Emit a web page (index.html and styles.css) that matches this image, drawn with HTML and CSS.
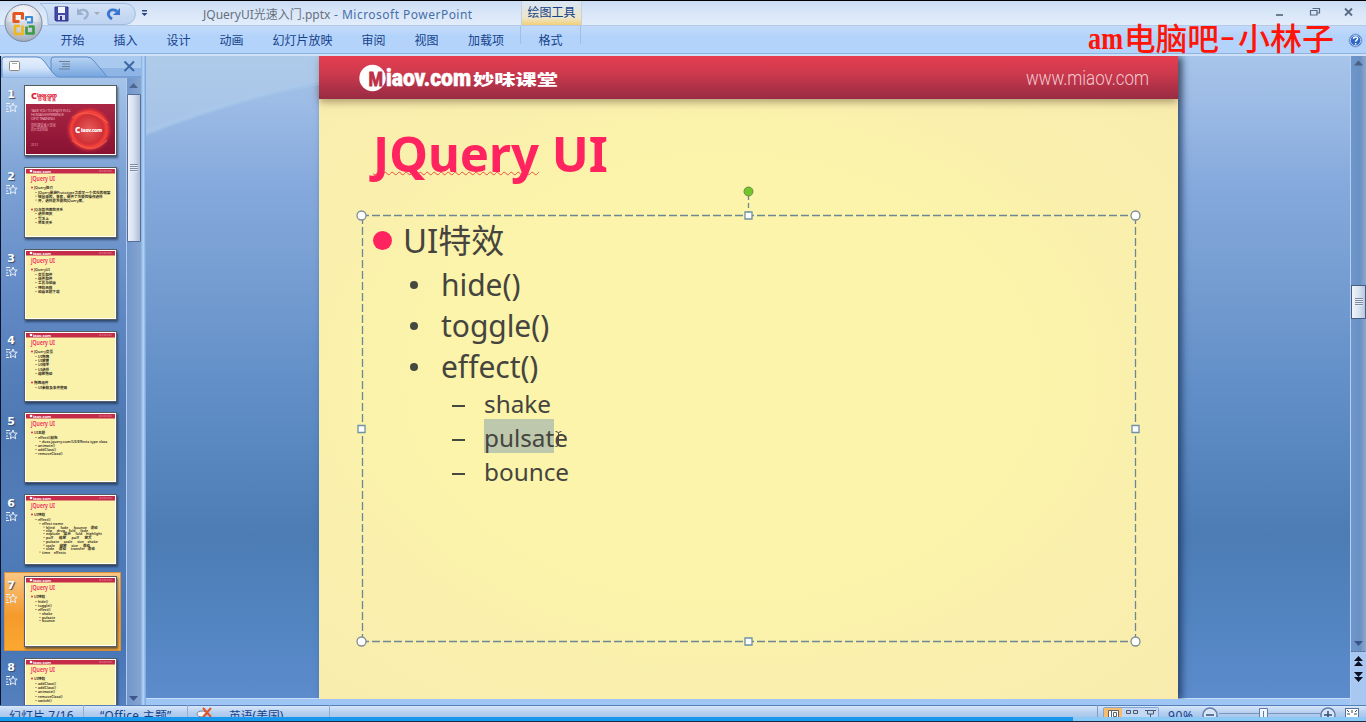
FILE: index.html
```html
<!DOCTYPE html>
<html lang="zh-CN">
<head>
<meta charset="utf-8">
<title>JQueryUI光速入门.pptx - Microsoft PowerPoint</title>
<link rel="stylesheet" href="styles.css">
</head>
<body>
<div class="app">
  <header class="ribbon">
    <div class="titlebar">
      <div class="quick">
        <svg class="quick-icons" width="156" height="26" viewBox="0 0 156 26">
          <defs><linearGradient id="qg" x1="0" y1="0" x2="0" y2="1"><stop offset="0" stop-color="#d3e2f6"/><stop offset="1" stop-color="#bdd3f1"/></linearGradient></defs>
          <path d="M40 3.500H124c15 0 15 21 0 21H48C48 15 47 8 40 3.500Z" fill="url(#qg)" stroke="#9ebbe0"/>
          <path d="M55 7h13v14H56l-1-1z" fill="#4148a8" stroke="#30348c"/><path d="M58 7h7v6h-7z" fill="#f4f6ff"/><path d="M58 15h7v5h-7z" fill="#d4d9ee"/><path d="M60 16h2v4h-2z" fill="#30348c"/>
          <path d="M79 11c8-4 12 4 5 8" fill="none" stroke="#9db0d0" stroke-width="2.500"/><path d="M77 8v7h7z" fill="#9db0d0"/>
          <path d="M94 12h6l-3 3z" fill="#a4a9b5"/>
          <path d="M117 11c-8-4-12 4-5 8" fill="none" stroke="#3a75cf" stroke-width="3"/><path d="M120 8v7h-7z" fill="#3a75cf"/>
          <path d="M142 10h5v1.500h-5zM141.500 13h6l-3 3z" fill="#28467e"/>
        </svg>
      </div>
      <div class="doc-title"><span>JQueryUI光速入门.pptx</span><span class="app-name"> - Microsoft PowerPoint</span></div>
      <div class="context-title">绘图工具</div>
      <svg class="win-buttons" width="90" height="25" viewBox="0 0 90 25">
        <path d="M1 14h7" stroke="#586a86" stroke-width="1.700"/>
        <path d="M37.500 7.500h7v4.500h-2M35.500 9.500h6.500v4.500h-6.500z" fill="none" stroke="#586a86" stroke-width="1.200"/>
        <path d="M70 7.500l7 7M77 7.500l-7 7" stroke="#586a86" stroke-width="1.800"/>
      </svg>
    </div>
    <nav class="tabs">
      <span>开始</span><span>插入</span><span>设计</span><span>动画</span><span>幻灯片放映</span><span>审阅</span><span>视图</span><span>加载项</span><span class="context-tab">格式</span>
    </nav>
    <svg class="orb" width="42" height="42" viewBox="0 0 42 42">
      <defs><radialGradient id="og" cx=".5" cy=".3" r=".7"><stop offset="0" stop-color="#fff"/><stop offset=".55" stop-color="#dfe3ea"/><stop offset="1" stop-color="#9da8b8"/></radialGradient></defs>
      <circle cx="21.500" cy="22" r="18.500" fill="url(#og)" stroke="#78889f"/>
      <path d="M4 22c8-3 25-3 35 0c-1 21-34 21-35 0" fill="#a7b5c9" opacity=".35"/>
      <g fill="none" transform="translate(.5 .5)">
        <path d="M17 20h-5.500v-8h8.500v6" stroke="#e2571f" stroke-width="3.200" stroke-linejoin="round"/>
        <path d="M23.500 19v-3.500h6v5.500h-5" stroke="#3c8ed6" stroke-width="2.200" stroke-linejoin="round"/>
        <path d="M20 24v8.500h-7.500v-8h5" stroke="#f2b51d" stroke-width="2.700" stroke-linejoin="round"/>
        <path d="M24 25v7h7v-7h-5" stroke="#3f9b47" stroke-width="2.700" stroke-linejoin="round"/>
      </g>
    </svg>
    <div class="watermark">
      <svg width="250" height="36" viewBox="0 0 250 36">
        <g class="wm-text"><text x="1" y="25.500" textLength="35" lengthAdjust="spacingAndGlyphs">am</text><text class="wm-cjk" x="37" y="26.500" textLength="95" lengthAdjust="spacingAndGlyphs">电脑吧</text><text x="133" y="23" textLength="15" lengthAdjust="spacingAndGlyphs">-</text><text class="wm-cjk" x="151" y="26.500" textLength="96" lengthAdjust="spacingAndGlyphs">小林子</text></g>
      </svg>
    </div>
    <svg class="help" width="15" height="15" viewBox="0 0 15 15"><circle cx="7.500" cy="7.500" r="6.500" fill="#2e66c8" stroke="#8aa9d8"/><circle cx="7.500" cy="7.500" r="5.200" fill="none" stroke="#dce9fb" stroke-width=".8"/><path d="M5.500 6c0-3 4.500-2.500 4 0c-.3 1.200-1.900 1.300-1.900 2.700M7.600 10v1.500" fill="none" stroke="#fff" stroke-width="1.500"/></svg>
  </header>

  <main class="workspace">
    <aside class="panel">
      <svg class="panel-tabs" width="140" height="22" viewBox="0 0 140 22">
        <defs><linearGradient id="pt" x1="0" y1="0" x2="0" y2="1"><stop offset="0" stop-color="#e5effc"/><stop offset=".55" stop-color="#d3e4fa"/><stop offset="1" stop-color="#a0c2ec"/></linearGradient>
        <linearGradient id="pt2" x1="0" y1="0" x2="0" y2="1"><stop offset="0" stop-color="#b8d3f3"/><stop offset="1" stop-color="#77a6df"/></linearGradient></defs>
        <path d="M0 0h140v22H0z" fill="#a9c9ef"/><path d="M0 12h140v10H0z" fill="#8fb5e6"/>
        <path d="M50 20.500V4q0-3 3-3H86q4 0 7 4l13 15.500" fill="url(#pt2)" stroke="#5e8cc6"/>
        <path d="M1 21V4q0-3 3-3H36q4 0 7 4l9 12q3 4 7 4z" fill="url(#pt)"/><path d="M1 21V4q0-3 3-3H36q4 0 7 4l9 12q3 4 7 4H140" fill="none" stroke="#5e8cc6"/>
        <rect x="8.500" y="5.500" width="10" height="9" rx="1" fill="#fff" stroke="#8d887c"/><path d="M11 7.500h5" stroke="#aaa"/>
        <path d="M58 5.500h11M61 8h8M61 10.500h8M58 13h11" stroke="#6d7f98" stroke-width="1.200"/>
        <path d="M123.500 5.500l9.500 9.500M133 5.500l-9.500 9.500" stroke="#3c69a4" stroke-width="2"/>
      </svg>
      <div class="panel-body">
        <div class="thumbs" id="thumbs"></div>
        <div class="scroll left-scroll">
          <svg width="14" height="16"><path d="M2 10h9l-4.500-5z" fill="#4e6791"/></svg>
          <div class="left-thumb"><i></i></div>
          <svg class="down" width="14" height="14"><path d="M2 5h9l-4.500 5z" fill="#3e568c"/></svg>
        </div>
      </div>
    </aside>
    <div class="splitter"></div>
    <section class="stage">
      <svg class="stage-glow" viewBox="0 0 173 80" width="173" height="80"><path d="M0 0h173v26Q90 43 0 78z" fill="#b8d3ea" opacity=".45"/><path d="M0 73Q85 38 173 26v3Q85 46 0 80z" fill="#a9caeb" opacity=".4"/></svg>
      <article class="slide">
        <div class="slide-head">
          <svg width="205" height="32" viewBox="0 0 205 32">
            <circle cx="13.500" cy="16" r="13.200" fill="#fff"/>
            <text class="logo-m" x="9.500" y="23.500" textLength="14.500" lengthAdjust="spacingAndGlyphs">M</text>
            <text class="logo-word" x="27" y="24.200" textLength="85" lengthAdjust="spacingAndGlyphs">iaov.com</text>
            <g transform="translate(114 22.500) scale(1 .86)"><text class="logo-cjk" x="0" y="0" textLength="85" lengthAdjust="spacingAndGlyphs">妙味课堂</text></g>
          </svg>
          <svg width="126" height="30" viewBox="0 0 126 30"><text class="site" x="2" y="23" textLength="123" lengthAdjust="spacingAndGlyphs">www.miaov.com</text></svg>
        </div>
        <h1 class="slide-title"><span class="misspelt">JQuery</span> UI</h1>
        <div class="textbox">
          <p class="l1"><i></i>UI特效</p>
          <p class="l2"><i></i>hide()</p>
          <p class="l2"><i></i>toggle()</p>
          <p class="l2"><i></i>effect()</p>
          <p class="l3"><i></i>shake</p>
          <p class="l3"><i></i><span class="selected">pulsat</span>e</p>
          <p class="l3"><i></i>bounce</p>
          <svg class="frame" width="790" height="466" viewBox="0 0 790 466">
            <g fill="none" stroke="#6d8795" stroke-width="1.300"><path d="M8 32.500H781M8 458.500H781M782.500 33V458M9.500 33V458" stroke-dasharray="8 3"/><path d="M395.500 12v18" stroke-dasharray="5 3"/></g>
            <g fill="#fff" stroke="#7f8c98" stroke-width="1.300"><circle cx="8.500" cy="32.500" r="4.500"/><circle cx="782.500" cy="32.500" r="4.500"/><circle cx="8.500" cy="458.500" r="4.500"/><circle cx="782.500" cy="458.500" r="4.500"/><path d="M392 29h7v7h-7zM392 455h7v7h-7zM5 242.500h7v7h-7zM779 242.500h7v7h-7z" stroke="#6d91a5"/></g>
            <circle cx="395.500" cy="8.500" r="4.500" fill="#72c62b" stroke="#6d8c4a"/>
            <path d="M202.500 248.500q3 0 3 2v11q0 2-3 2M208.500 248.500q-3 0-3 2M205.500 261.500q0 2 3 2" fill="none" stroke="#444"/>
          </svg>
        </div>
      </article>
    </section>
    <div class="scroll right-scroll">
      <svg width="15" height="17"><path d="M3 9.500h9l-4.500-5z" fill="#4c5e80"/></svg>
      <div class="right-thumb"><i></i></div>
      <svg class="right-down" width="15" height="64" viewBox="0 0 15 64"><path d="M3 0h9l-4.500 5z" fill="#3c5388"/><path d="M0 10.500h15" stroke="#5c6f94" stroke-dasharray="2 1"/><path d="M0 11h15v53H0z" fill="#a8c8f1"/><path d="M3 20h9l-4.500-5zM3 25h9l-4.500-5zM3 31h9l-4.500 5zM3 36h9l-4.500 5z" fill="#0a1020"/></svg>
    </div>
  </main>

  <footer class="status">
    <span class="s1">幻灯片 7/16</span><span class="s2">“Office 主题”</span>
    <span class="s3"><svg width="18" height="12" viewBox="0 0 18 12"><ellipse cx="6" cy="9" rx="5" ry="3" fill="#f4f4f4" stroke="#7c8798"/><path d="M7 3l8 9M15 3l-8 9" stroke="#e4532a" stroke-width="2"/></svg>英语(美国)</span>
    <span class="s4"></span>
    <svg class="views" width="262" height="12" viewBox="0 0 262 12">
      <path d="M.5 0v12" stroke="#7d9fca"/><rect x="6.500" y="2.500" width="55" height="14" rx="1" fill="#c2d8f5" stroke="#85a4ce"/><path d="M7 3h18v9H7z" fill="#f5bd6d"/>
      <path d="M11.500 5.500h10v8h-10zM14.500 5v7M16.500 7.500h3v4h-3z" fill="#fff" stroke="#5f6270"/>
      <path d="M29.500 5.500h4v3h-4zM36.500 5.500h4v3h-4zM48 5.500h11M50.500 6v3h6v-3M53.500 9v3" fill="none" stroke="#4d596b"/>
      <text x="71" y="14.500" class="zoom" textLength="25">90%</text>
      <circle cx="113" cy="10" r="7" fill="#d8e5f7" stroke="#647eaa" stroke-width="1.500"/><path d="M109 10h8" stroke="#314c7a" stroke-width="1.500"/>
      <path d="M122 8.500h105" stroke="#7b95bd"/><path d="M162.500 3.500h8v12h-8z" fill="#eef5ff" stroke="#657ca6"/><path d="M166.500 6v6" stroke="#657ca6"/>
      <circle cx="231" cy="10" r="7" fill="#d8e5f7" stroke="#647eaa" stroke-width="1.500"/><path d="M227 10h8M231 6v8" stroke="#314c7a" stroke-width="1.500"/>
      <rect x="248.500" y="3.500" width="13" height="12" fill="#fff" stroke="#54709c"/><path d="M255 5v3M250 9h3M257 9h3M250 5l2 2M260 5l-2 2" stroke="#39424f"/>
    </svg>
  </footer>
  <div class="progress"><i></i></div>
</div>
<script src="thumbs.js"></script>
</body>
</html>
```

FILE: styles.css
```css
* { box-sizing: border-box; }
body { margin: 0; overflow: hidden; font-family: "Noto Sans", "Noto Sans CJK SC", sans-serif; background: #1b2a40; }
p, h1 { margin: 0; font-weight: 400; }
svg { display: block; flex: none; }
.app { width: 1366px; height: 722px; display: flex; flex-direction: column; border-top: 1px solid #000; }

/* ribbon */
.ribbon { position: relative; height: 55px; flex: none; }
.titlebar { height: 25px; display: flex; background: linear-gradient(#c9dbf4, #d9e6f8 45%, #e2edfb); border-bottom: 1px solid #b4cae6; }
.quick { width: 203px; flex: none; }
.quick-icons { margin-top: -1px; }
.doc-title { width: 318px; flex: none; white-space: pre; font-size: 12px; line-height: 27px; color: #66717f; }
.app-name { color: #466fa8; letter-spacing: .48px; }
.context-title { width: 61px; flex: none; text-align: center; font-size: 12px; line-height: 24px; color: #15428b; background: linear-gradient(#d8e6f7, #eee6c8 70%, #f3cf76); border-left: 1px solid #c4d0dc; border-right: 1px solid #c4d0dc; }
.win-buttons { margin-left: auto; width: 92px; }
.tabs { height: 30px; display: grid; grid-template-columns: 53px 53px 53px 53px 89px 53px 53px 66px 61px; padding-left: 46px; background: linear-gradient(#c2dafa, #b3d3fb 40%, #b3d3fb); border-bottom: 2px solid #cfe1f6; box-shadow: inset 0 -1px #91b3df; font-size: 12px; line-height: 29px; text-align: center; color: #15428b; }
.tabs .context-tab { margin: 0 -1px 0 1px; border-left: 1px solid #a4bfdc; border-right: 1px solid #a4bfdc; height: 18px; }
.orb { position: absolute; left: 2px; top: 0; }
.help { position: absolute; left: 1348px; top: 32px; }
.watermark { position: absolute; left: 1087px; top: 22px; }
.watermark svg { overflow: visible; }
.wm-text { font: bold 32px "Liberation Serif", serif; fill: #ff1408; }
.wm-cjk { font: 500 31px "Noto Sans CJK SC", sans-serif; }

/* workspace */
.workspace { height: 649px; flex: none; display: flex; background: linear-gradient(#a7c5e9, #9dbce6 45px, #85a9dc 130px, #789fd3 210px, #6390c8 320px, #4d7cb4 480px, #5284c0 560px, #5e8cce 649px); }
.panel { width: 141px; flex: none; border-left: 1px solid #08142c; }
.panel-body { display: flex; height: 627px; background: linear-gradient(#a6c4e8, #7fa4d6 90px, #6088c4 230px, #4d78b2 350px, #527db8 450px, #4574b6 560px, #5580bd); }
.thumbs { width: 125px; flex: none; padding-top: 4px; overflow: hidden; }
.thumb { height: 81.850px; width: 119px; padding: 3px 4px 0 3px; display: flex; }
.thumb.active { background: linear-gradient(#f9c887, #f49a2b 55%, #fba931); box-shadow: inset 0 0 0 1px #dd913b; height: 79px; margin: -1px 0 3.850px 3px; width: 117px; padding: 4px 0 0; }
.num { width: 20px; flex: none; color: #fff; font: bold 11px/15px "DejaVu Sans", sans-serif; text-align: center; padding: 2px 6px 0 0; text-shadow: 1px 1px 1px #36486c; }
.num svg { margin: 0 0 0 2px; }
.pic { border: 1px solid #565d5e; box-shadow: 1px 2px 2px rgba(20, 35, 60, .6); height: 71px; }
.t-title { font: 600 6.4px "Noto Sans", sans-serif; fill: #f12560; }
.t-body { font: 600 3.6px "Noto Sans", "Noto Sans CJK SC", sans-serif; fill: #332f24; white-space: pre; }
.t-logo { font: bold 4px "Noto Sans", sans-serif; fill: #fff; }
.scroll { flex: none; display: flex; flex-direction: column; }
.left-scroll { width: 15px; border-left: 1px solid #b2cbed; background: linear-gradient(90deg, #7196cd, #86a5ce); }
.left-thumb { height: 148px; border: 1px solid #586d95; border-radius: 1px; background: linear-gradient(90deg, #edf2f9, #d5e0f0 50%, #aebdd4); display: grid; place-items: center; }
.scroll i { width: 8px; height: 8px; background: repeating-linear-gradient(#7e8ba2 0 1px, #e6edf6 1px 2px); }
.down { margin-top: auto; }
.splitter { width: 5px; flex: none; background: linear-gradient(90deg, #83b0e6, #b5d4f7 45%, #79a3d7); }
.stage { position: relative; width: 1204px; flex: none; padding-left: 173px; border-bottom: 6px solid #9ec5f3; box-shadow: inset 0 -1px #c7e0fa; overflow: hidden; }
.stage-glow { position: absolute; left: 0; top: 0; }
.slide { width: 859px; height: 643px; background: radial-gradient(ellipse at 47% 50%, #fbf4aa 45%, #faf0ad 65%, #f9ecae); box-shadow: 4px 1px 7px rgba(28, 52, 95, .8); }
.slide-head { height: 43px; display: flex; justify-content: space-between; padding: 6px 28px 0 40px; background: linear-gradient(#e63e50, #cd394d 40%, #982b43); box-shadow: 0 3px 8px rgba(108, 84, 58, .55); }
.logo-m { font: bold 21px "Liberation Sans", sans-serif; fill: #bd2f45; stroke: #bd2f45; stroke-width: 1px; }
.logo-word { font: 900 24px Roboto, sans-serif; fill: #fff; stroke: #fff; stroke-width: .5px; }
.logo-cjk { font: 800 17px "Noto Sans CJK SC", sans-serif; fill: #fff; }
.site { font: 300 20px Roboto, sans-serif; fill: #f5c8d0; }
.slide-title { height: 90px; padding: 20px 0 0 54px; font-weight: 700; font-size: 49px; line-height: 68px; color: #ff2460; }
.misspelt { text-decoration: underline wavy #ee513b 1px; text-decoration-skip-ink: none; text-underline-offset: -1px; }
.textbox { position: relative; margin-left: 43px; padding-top: 31px; color: #45443e; }
.textbox p { display: flex; align-items: center; }
.textbox .l1 { height: 41px; font-size: 33px; line-height: 41px; padding-left: 11px; margin-bottom: 3px; }
.textbox .l2 { height: 41px; font-size: 30px; line-height: 41px; padding-left: 48px; letter-spacing: -.05px; }
.textbox .l3 { height: 34px; font-size: 24.300px; line-height: 34px; padding-left: 90px; }
.textbox .l1 i { width: 19px; height: 19px; border-radius: 50%; background: #ff245f; margin-right: 11px; }
.textbox .l2 i { width: 8px; height: 8px; border-radius: 50%; background: #454941; margin-right: 23px; }
.textbox .l3 i { width: 13px; height: 2px; background: #454941; margin: 3px 19px 0 0; }
.selected { background: #bec8ad; height: 34px; margin-top: -4px; padding-top: 2px; line-height: 34px; }
.frame { position: absolute; left: -9px; top: -6px; }
.right-scroll { width: 16px; border-left: 1px solid #b5d1f1; background: linear-gradient(90deg, #6f96cb, #6a91c4 60%, #8fa7c9); }
.right-thumb { height: 34px; margin-top: 212px; border: 1px solid #475d86; background: linear-gradient(90deg, #f1f5fb, #d7e2f1 55%, #bac8dc); display: grid; place-items: center; }
.right-down { margin-top: auto; }

/* status bar */
.status { height: 12px; flex: none; overflow: hidden; display: flex; background: linear-gradient(#547fb9 0 1px, #d8e7fa 1px, #b7d0f0 60%, #a8c6eb); color: #15428b; font-size: 11.800px; line-height: 20px; white-space: nowrap; }
.s1 { width: 84px; padding-left: 9px; letter-spacing: .2px; border-right: 1px solid #90aed5; }
.s2 { width: 104px; padding-left: 16px; letter-spacing: .35px; border-right: 1px solid #90aed5; }
.s3 { width: 142px; display: flex; gap: 15px; padding-left: 8px; border-right: 1px solid #90aed5; }
.s4 { width: 767px; }
.zoom { font: 12px "Noto Sans", sans-serif; fill: #15428b; }
.progress { height: 4px; flex: none; background: #8bcaf7; }
.progress i { display: block; width: 1073px; height: 4px; background: #1898ed; }
```

FILE: thumbs.js
```js
// Each line: [x, baseline, text, top level?]; the first slide is the cover.
const slides = [
  null,
  [[9,21,'JQuery简介',1],[13,26,'JQuery是继Prototype之后又一个优秀的框架'],[13,29.5,'轻量级的，兼容，提供了方便的操作选择'],[13,33.5,'并，选择更方便的JQuery库。'],[9,43,'JQ与其他库的关系',1],[13,47,'选择网页'],[13,52,'写法上'],[13,56,'原生关系']],
  [[9,21,'JQueryUI',1],[13,26,'交互部件'],[13,30,'组件部件'],[13,34,'工具与动画'],[13,39,'特效函数'],[13,43,'动画主题下载']],
  [[9,21,'JQuery交互',1],[13,26,'UI拖拽'],[13,30,'UI放置'],[13,34,'UI排序'],[13,39,'UI选择'],[13,43,'缩放拖动'],[9,52,'拖拽组件',1],[13,57,'UI参数及事件使用']],
  [[9,21,'UI主题',1],[13,26,'effect()颜色'],[17,30,'docs.jquery.com/UI/Effects type class'],[13,34,'animate()'],[13,38,'addClass()'],[13,42,'removeClass()']],
  [[9,21,'UI特效',1],[13,26,'effect()'],[17,30,'effect name'],[21,33.5,'blind      fade      bounce    滑动'],[21,37,'clip     drop    fold     fade'],[21,40,'explode    展示     fold    highlight'],[21,44,'puff      缩放      puff      放大'],[21,48,'pulsate     scale     size    shake'],[21,51.5,'scale     缩放     size     滑动'],[21,55,'slide     滑动     transfer   滑动'],[17,58.5,'time    effects']],
  [[9,21,'UI特效',1],[13,26,'hide()'],[13,30,'toggle()'],[13,34,'effect()'],[17,38,'shake'],[17,42,'pulsate'],[17,45,'bounce']],
  [[9,21,'UI特效',1],[13,26,'addClass()'],[13,30,'addClass()'],[13,34,'animate()'],[13,39,'removeClass()'],[13,43,'switch()']]
];
const star = '<svg width="12" height="12" viewBox="0 0 12 12"><path d="M7 1l1.200 3 3 .2-2.300 1.900.8 3.700-2.700-1.900-2.700 1.900.8-3.700-2.300-1.900 3-.2zM0 1.500h4M0 4h2M0 7h2M0 9.500h3" fill="none" stroke="#e8eff9"/></svg>';

const cover = '<defs><linearGradient id="cv" x1="0" y1="0" x2="0" y2="1"><stop offset="0" stop-color="#a92745"/><stop offset="1" stop-color="#881132"/></linearGradient><radialGradient id="ball"><stop offset="0" stop-color="#e85d58"/><stop offset=".6" stop-color="#cf3038"/><stop offset=".75" stop-color="#fa4339"/><stop offset="1" stop-color="#a51736" stop-opacity="0"/></radialGradient></defs>'
  + '<path d="M0 0h91v69H0z" fill="#fff"/><path d="M1 18h89v50H1z" fill="url(#cv)"/><circle cx="64" cy="43.500" r="24" fill="url(#ball)"/><path d="M47 32q16-12 36 5M47 54q19 17 35 0" fill="none" stroke="#fa6754" stroke-width="1.500" opacity=".6"/>'
  + '<text x="6" y="12.500" font-size="9" font-weight="900" fill="#df1f3c" textLength="6" lengthAdjust="spacingAndGlyphs">C</text><text x="12" y="10.500" font-size="5" font-weight="900" fill="#df1f3c" textLength="20">iaov.com</text><text x="13" y="14.500" font-size="4" font-weight="700" fill="#df1f3c" textLength="18">妙味课堂</text>'
  + '<g fill="#e9a8b8" font-size="4"><text x="6" y="26" textLength="40">TAKE YOU TO ENJOY FULL</text><text x="6" y="30" textLength="33">HUMAN EXPERIENCE</text><text x="6" y="34" textLength="24">OF IT TRAINING</text><text x="6" y="41" textLength="25" lengthAdjust="spacingAndGlyphs">带你感受最人性化</text><text x="6" y="45" textLength="17" lengthAdjust="spacingAndGlyphs">的IT培训体验</text><text x="6" y="60" font-size="3">2012</text></g>'
  + '<text x="50" y="47" font-size="8" font-weight="900" fill="#fff">C</text><text x="56" y="46" font-size="5" font-weight="900" fill="#fff" textLength="21">iaov.com</text>';

function drawSlide(lines) {
  let s = '<path d="M0 0h91v69H0z" fill="#fff"/><path d="M1 1h89v67H1z" fill="#faf1ab"/><path d="M1 1h89v4.500H1z" fill="#c52c49"/><circle cx="6" cy="3" r="1.300" fill="#fff"/><text class="t-logo" x="8" y="4.500" textLength="18" lengthAdjust="spacingAndGlyphs">iaov.com</text><path d="M74 3h13" stroke="#df7f90" stroke-dasharray="2 .5"/><text class="t-title" x="6" y="13" textLength="24" lengthAdjust="spacingAndGlyphs">JQuery UI</text>';
  lines.forEach(([x, y, t, top]) => {
    s += top ? `<circle cx="7" cy="${y - 1.5}" r="1" fill="#ef2359"/>` : `<circle cx="${x - 2}" cy="${y - 1.5}" r=".5" fill="#333"/>`;
    s += `<text class="t-body" x="${x}" y="${y}">${t}</text>`;
  });
  return s;
}

document.getElementById('thumbs').innerHTML = slides.map((lines, i) =>
  `<div class="thumb${i === 6 ? ' active' : ''}"><div class="num">${i + 1}${star}</div><div class="pic"><svg width="91" height="69" viewBox="0 0 91 69">${i ? drawSlide(lines) : cover}</svg></div></div>`
).join('');
```
